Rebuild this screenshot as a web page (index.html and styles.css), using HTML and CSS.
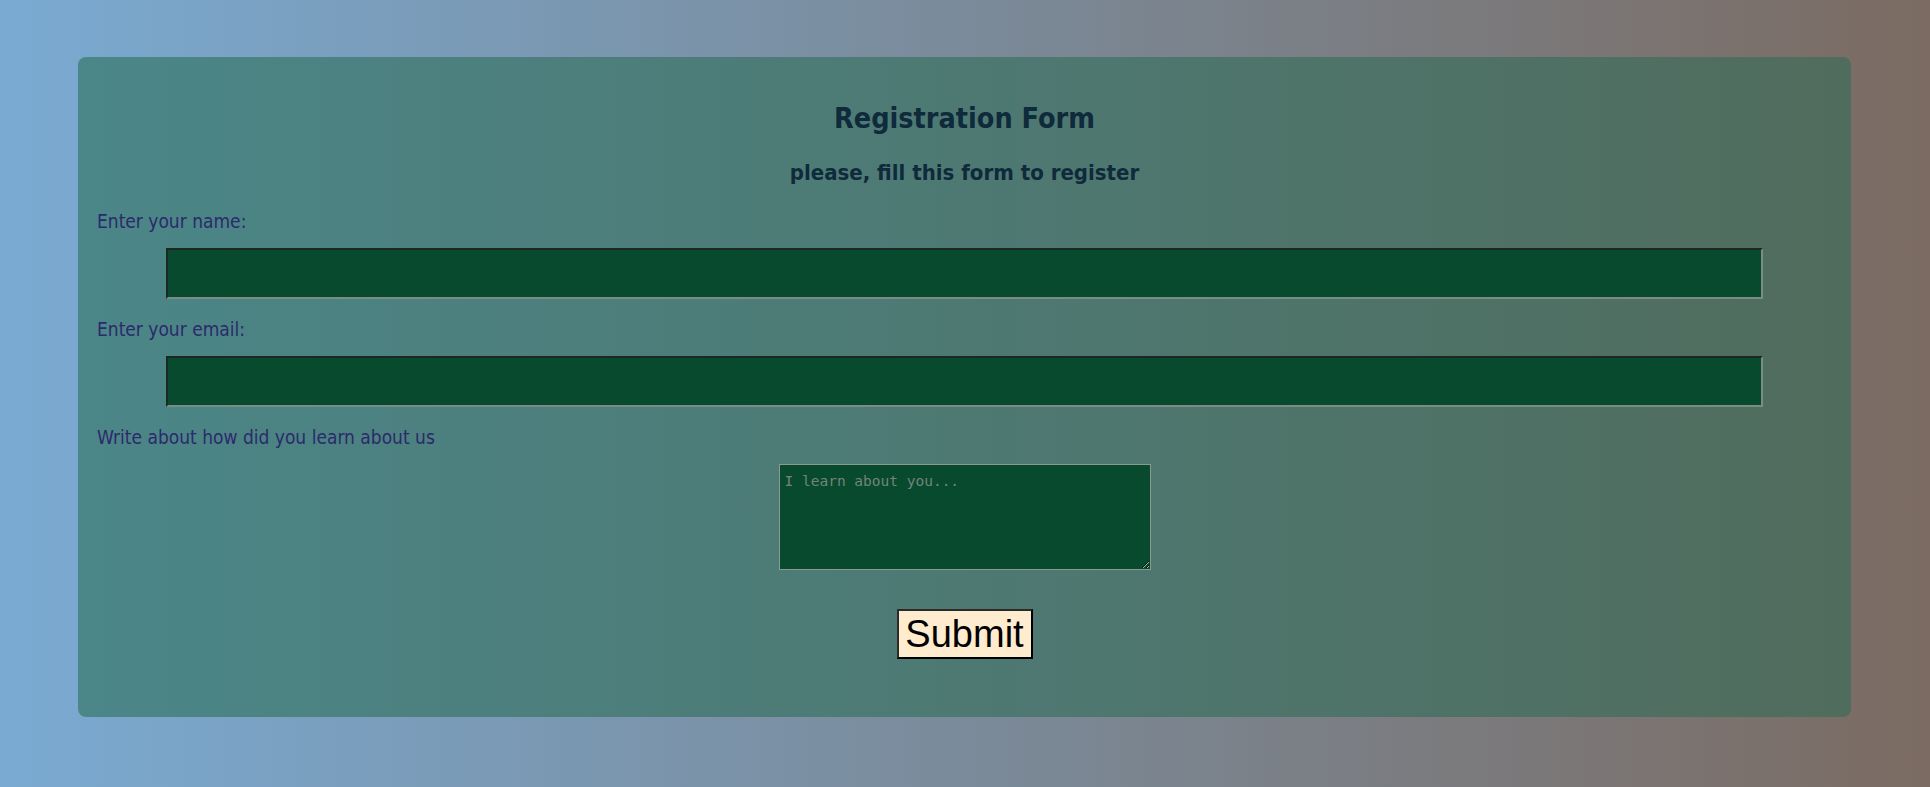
FILE: index.html
```html
<!DOCTYPE html>
<html lang="en">
<head>
<meta charset="utf-8">
<title>Registration Form</title>
<link rel="stylesheet" href="styles.css">
</head>
<body>
<form class="card">
  <h1 class="title">Registration Form</h1>
  <h3 class="subtitle">please, fill this form to register</h3>
  <label class="label" for="name">Enter your name:</label>
  <input class="field" id="name" type="text">
  <label class="label" for="email">Enter your email:</label>
  <input class="field" id="email" type="email">
  <label class="label" for="about">Write about how did you learn about us</label>
  <textarea class="area" id="about" placeholder="I learn about you..."></textarea>
  <button class="submit" type="submit">Submit</button>
</form>
</body>
</html>
```
FILE: styles.css
```css
html, body {
  margin: 0;
  padding: 0;
}
body {
  min-height: 787px;
  background: linear-gradient(to right, #7aaad2, #7b6b62);
  font-family: "DejaVu Sans Condensed", "DejaVu Sans", sans-serif;
  font-stretch: condensed;
  padding: 57px 79px 0 78px;
  box-sizing: border-box;
}
.card {
  display: flex;
  flex-direction: column;
  align-items: flex-start;
  background: linear-gradient(to right, #4b8688, #506c5d);
  border-radius: 8px;
  padding: 45px 19px 58px 19px;
  box-sizing: border-box;
  height: 660px;
}
.title {
  align-self: stretch;
  text-align: center;
  margin: 0;
  font-size: 28.5px;
  line-height: 33px;
  font-weight: bold;
  color: #0f2a3b;
}
.subtitle {
  align-self: stretch;
  text-align: center;
  margin: 25px 0 0 0;
  font-size: 22px;
  line-height: 26px;
  font-weight: bold;
  color: #0f2a3b;
}
.label {
  font-size: 19px;
  line-height: 24px;
  color: #2b2a6b;
}
.subtitle + .label {
  margin-top: 23px;
}
.field + .label {
  margin-top: 18px;
}
.field {
  align-self: center;
  width: 92%;
  height: 51px;
  box-sizing: border-box;
  margin: 15px 0 0 0;
  background: #074a2e;
  border-style: solid;
  border-width: 2px;
  border-color: #1c2824 #7b8c84 #7b8c84 #1c2824;
  color: #dfe;
}
.area {
  align-self: center;
  width: 372px;
  height: 107px;
  box-sizing: border-box;
  margin: 15px 0 0 0;
  background: #074a2e;
  border: 1px solid #8a9a90;
  padding: 8px 5px 4px 5px;
  font-family: "DejaVu Sans Mono", monospace;
  font-stretch: normal;
  font-size: 14.5px;
  color: #dfe;
}
.area::placeholder {
  color: #73847a;
}
.submit {
  align-self: center;
  margin-top: 39px;
  width: 136px;
  height: 50px;
  box-sizing: border-box;
  padding: 0;
  background: #ffebcd;
  border-style: solid;
  border-width: 2px;
  border-color: #2a2a2a #000 #000 #2a2a2a;
  font-family: "Liberation Sans", Arial, sans-serif;
  font-stretch: normal;
  font-size: 38px;
  line-height: 44px;
  color: #000;
}
```
